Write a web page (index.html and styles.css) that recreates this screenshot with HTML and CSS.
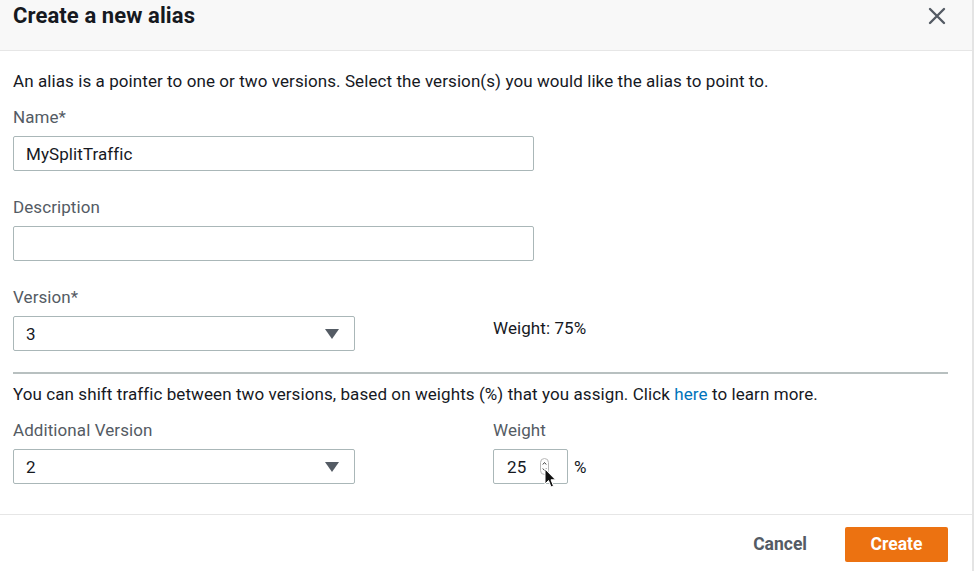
FILE: index.html
```html
<!DOCTYPE html>
<html>
<head>
<meta charset="utf-8">
<link rel="stylesheet" href="styles.css">
</head>
<body>
<div class="modal">
  <div class="header">
    <h1 class="title">Create a new alias</h1>
    <span class="close" aria-label="Close">
      <svg width="18" height="18" viewBox="0 0 18 18"><path d="M2 2 L16 16 M16 2 L2 16" stroke="#545b64" stroke-width="2.4" stroke-linecap="round"/></svg>
    </span>
  </div>
  <div class="content">
    <p class="intro">An alias is a pointer to one or two versions. Select the version(s) you would like the alias to point to.</p>
    <div class="field">
      <label class="label">Name*</label>
      <div class="input wide">MySplitTraffic</div>
    </div>
    <div class="field">
      <label class="label">Description</label>
      <div class="input wide"></div>
    </div>
    <div class="row">
      <div class="field">
        <label class="label">Version*</label>
        <div class="select"><span>3</span><span class="caret"></span></div>
      </div>
      <div class="weight-text">Weight: 75%</div>
    </div>
    <hr class="divider">
    <p class="shift">You can shift traffic between two versions, based on weights (%) that you assign. Click <a class="link" href="#">here</a> to learn more.</p>
    <div class="row">
      <div class="field">
        <label class="label">Additional Version</label>
        <div class="select"><span>2</span><span class="caret"></span></div>
      </div>
      <div class="field">
        <label class="label">Weight</label>
        <div class="weight-row">
          <div class="number">
            <span>25</span>
            <span class="spinner">
              <svg width="9" height="17" viewBox="0 0 9 17"><rect x="0.5" y="0.5" width="8" height="16" rx="4" fill="#fff" stroke="#b8b8b8"/><path d="M2.8 6.5 L4.5 4.5 L6.2 6.5 M2.8 10.5 L4.5 12.5 L6.2 10.5" fill="none" stroke="#444" stroke-width="1"/></svg>
            </span>
            <svg class="cursor" width="13" height="21" viewBox="0 0 13 21"><path d="M1 1 L1 16 L4.5 12.5 L7 19 L9.5 18 L7 11.8 L11.5 11.8 Z" fill="#111" stroke="#fff" stroke-width="1"/></svg>
          </div>
          <span class="pct">%</span>
        </div>
      </div>
    </div>
  </div>
  <div class="footer">
    <button class="cancel">Cancel</button>
    <button class="create">Create</button>
  </div>
</div>
</body>
</html>
```
FILE: styles.css
```css
* { box-sizing: border-box; }
html, body { margin: 0; padding: 0; background: #fff; }
body { font-family: Roboto, "Liberation Sans", sans-serif; color: #16191f; font-size: 17px; letter-spacing: 0.08px; }
.modal { width: 974px; height: 571px; border-right: 2px solid #e4e4e4; display: flex; flex-direction: column; }
.header { height: 51px; background: #f8f8f8; border-bottom: 1px solid #e6e6e6; display: flex; justify-content: space-between; align-items: flex-start; padding: 4px 26px 0 13px; }
.title { margin: 0; font-size: 22px; font-weight: 700; line-height: 24px; color: #16191f; letter-spacing: 0.1px; }
.close { display: flex; padding-top: 3px; }
.content { padding: 20px 24px 0 13px; flex: 1; }
.intro, .shift { margin: 0; line-height: 20px; }
.intro { margin-bottom: 16px; }
.field { display: flex; flex-direction: column; }
.label { line-height: 20px; color: #545b64; margin-bottom: 9px; }
.field + .field { margin-top: 26px; }
.input { height: 35px; border: 1px solid #aab7b8; border-radius: 2px; padding: 0 12px; display: flex; align-items: center; color: #16191f; }
.wide { width: 521px; }
.row { display: grid; grid-template-columns: 480px 1fr; margin-top: 26px; }
.row .field + .field { margin-top: 0; }
.select { width: 342px; height: 35px; border: 1px solid #aab7b8; border-radius: 2px; padding: 0 15px 0 12px; display: flex; align-items: center; justify-content: space-between; }
.caret { width: 0; height: 0; border-left: 7px solid transparent; border-right: 7px solid transparent; border-top: 10px solid #545b64; }
.weight-text { padding-top: 31px; line-height: 20px; }
.divider { margin: 21px 0 0; border: 0; border-top: 2px solid #b8c0c0; }
.shift { margin-top: 10px; }
.link { color: #0073bb; text-decoration: none; }
.row + .row, .shift + .row { margin-top: 16px; }
.weight-row { display: flex; align-items: center; }
.number { position: relative; width: 75px; height: 35px; border: 1px solid #aab7b8; border-radius: 2px; display: flex; align-items: center; padding-left: 13px; }
.spinner { display: flex; margin-left: 14px; }
.cursor { position: absolute; left: 50px; top: 18px; }
.pct { margin-left: 6px; }
.footer { height: 57px; border-top: 1px solid #e6e6e6; display: flex; justify-content: flex-end; align-items: center; padding: 2px 24px 0 0; gap: 38px; }
button { font-family: inherit; font-weight: 700; font-size: 17.5px; border: 0; cursor: pointer; }
.cancel { background: none; color: #545b64; padding: 0; }
.create { background: #ec7211; color: #fff; width: 103px; height: 35px; border-radius: 2px; }
```
